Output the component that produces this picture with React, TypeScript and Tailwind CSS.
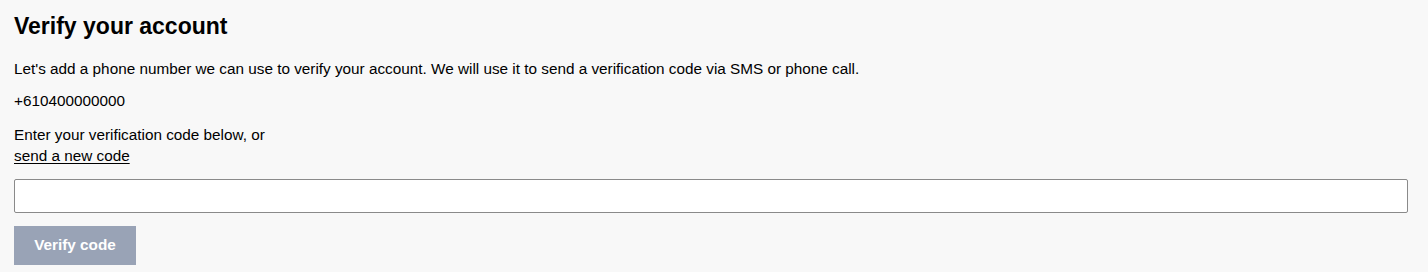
export default function App() {
  return (
    <div className="min-h-[272px] bg-[#f8f8f8] pl-[14px] pr-[20px] pt-[12px] font-['Liberation_Sans',Arial,sans-serif] text-[15.3px] text-black">
      <h1 className="text-[23px] leading-[28px] font-bold">Verify your account</h1>
      <p className="mt-[20px] leading-[18px]">
        Let's add a phone number we can use to verify your account. We will use it to send a verification code via SMS or phone call.
      </p>
      <p className="mt-[14px] leading-[18px]">+610400000000</p>
      <div className="mt-[14px] leading-[21px]">
        <p>Enter your verification code below, or</p>
        <a href="#" className="underline underline-offset-2">send a new code</a>
      </div>
      <input
        type="text"
        className="mt-[13px] block h-[34px] w-full rounded-[2px] border border-[#8a8a8a] bg-white px-2"
      />
      <button
        type="button"
        disabled
        className="mt-[13px] h-[39px] w-[122px] bg-[#99a3b6] text-[15.3px] font-bold text-white"
      >
        Verify code
      </button>
    </div>
  );
}
